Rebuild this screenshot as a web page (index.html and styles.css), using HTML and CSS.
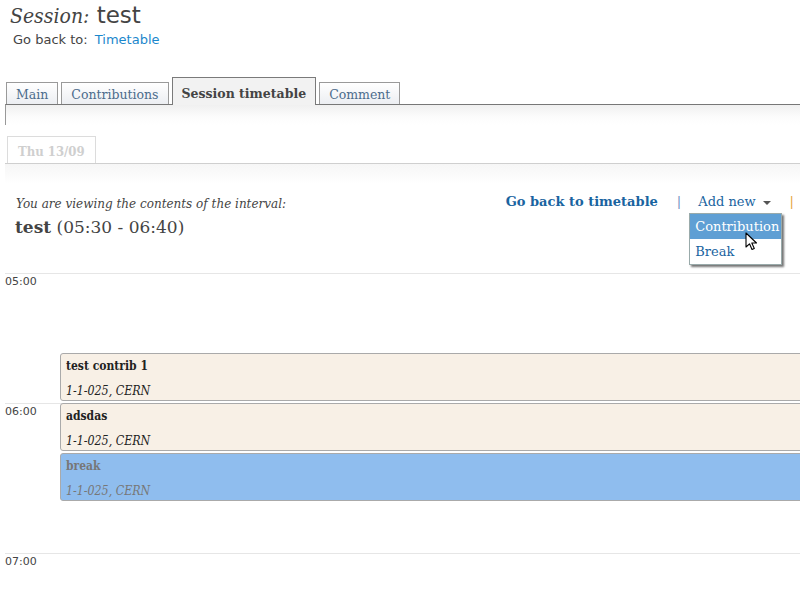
FILE: index.html
```html
<!DOCTYPE html>
<html>
<head>
<meta charset="utf-8">
<link rel="stylesheet" href="styles.css">
</head>
<body>
<div class="page">
  <h1 class="title"><span class="title-label">Session:</span> <span class="title-name">test</span></h1>
  <div class="backto">Go back to: <a class="backto-link">Timetable</a></div>

  <ul class="tabs">
    <li class="tab">Main</li>
    <li class="tab">Contributions</li>
    <li class="tab tab-active">Session timetable</li>
    <li class="tab">Comment</li>
  </ul>
  <div class="tabpanel"></div>

  <ul class="daytabs">
    <li class="daytab">Thu 13/09</li>
  </ul>
  <div class="dayshade"></div>

  <div class="interval">
    <div class="intinfo">
      <div class="viewing">You are viewing the contents of the interval:</div>
      <div class="inttitle"><b class="inttitle-name">test</b> (05:30 - 06:40)</div>
    </div>
    <div class="actions">
      <a class="action-back">Go back to timetable</a>
      <span class="sep sep-blue">|</span>
      <span class="addnew">Add new <span class="caret"></span>
        <span class="dropdown">
          <span class="dd-item dd-item-hover">Contribution</span>
          <span class="dd-item">Break</span>
          <svg class="cursor" width="13" height="20" viewBox="0 0 13 20"><path d="M1 1 L1 15 L4.5 11.8 L7 17.5 L9.3 16.5 L6.8 11 L11.5 11 Z" fill="#fff" stroke="#000" stroke-width="1.1" stroke-linejoin="round"/></svg>
        </span>
      </span>
      <span class="sep sep-orange">|</span>
    </div>
  </div>

  <div class="grid">
    <div class="hour hour-5"><span class="hour-label">05:00</span></div>
    <div class="hour hour-6"><span class="hour-label">06:00</span></div>
    <div class="hour hour-7"><span class="hour-label">07:00</span></div>

    <div class="entry entry-1">
      <div class="entry-title">test contrib 1</div>
      <div class="entry-loc">1-1-025, CERN</div>
    </div>
    <div class="entry entry-2">
      <div class="entry-title">adsdas</div>
      <div class="entry-loc">1-1-025, CERN</div>
    </div>
    <div class="entry entry-break">
      <div class="entry-title">break</div>
      <div class="entry-loc">1-1-025, CERN</div>
    </div>
  </div>
</div>
</body>
</html>
```

FILE: styles.css
```css
html, body {
  margin: 0;
  padding: 0;
  background: #fff;
  overflow: hidden;
}
body {
  font-family: "DejaVu Serif", serif;
  color: #444;
  width: 800px;
  height: 600px;
}
.page {
  width: 800px;
}
.title {
  margin: 0;
  padding-left: 10px;
  font-weight: normal;
  line-height: 24px;
  height: 24px;
  color: #444;
}
.title-label {
  font-family: "DejaVu Serif", serif;
  font-style: italic;
  font-size: 21px;
  font-stretch: condensed;
}
.title-name {
  font-family: "DejaVu Sans", sans-serif;
  font-size: 23px;
  margin-left: -3px;
}
.backto {
  margin-top: 8px;
  padding-left: 13px;
  font-family: "DejaVu Sans", sans-serif;
  font-size: 13px;
  line-height: 16px;
  color: #444;
}
.backto-link {
  color: #1b87cc;
  margin-left: 3px;
}

.tabs {
  list-style: none;
  margin: 29px 0 0 5px;
  padding: 0 0 0 1px;
  display: flex;
  align-items: flex-end;
  gap: 3px;
  height: 27px;
}
.tab {
  box-sizing: border-box;
  border: 1px solid #9a9a9a;
  border-bottom: none;
  height: 22px;
  line-height: 20px;
  padding: 2px 9px 0;
  font-size: 12.5px;
  color: #4c6c8c;
  background: linear-gradient(#fff, #eceef2);
}
.tab-active {
  box-sizing: border-box;
  height: 28px;
  line-height: 20px;
  padding: 6px 9px 0;
  margin-bottom: -1px;
  position: relative;
  z-index: 1;
  font-weight: bold;
  color: #444;
  border-color: #7a7a7a;
  background: #f2f2f2;
}
.tabpanel {
  margin-left: 5px;
  border-top: 1px solid #777;
  border-left: 1px solid #999;
  height: 20px;
  background: linear-gradient(#f0f0f0, #fcfcfc 60%, #fff);
}

.daytabs {
  list-style: none;
  margin: 11px 0 0 5px;
  padding: 0 0 0 2px;
  display: flex;
  height: 27px;
}
.daytab {
  border: 1px solid #dcdcdc;
  border-bottom: none;
  box-sizing: border-box;
  height: 27px;
  width: 89px;
  padding: 5px 0 0 10px;
  line-height: 20px;
  font-size: 13px;
  font-stretch: condensed;
  font-weight: bold;
  color: #cfcfcf;
  background: #fff;
}
.dayshade {
  margin-left: 5px;
  border-top: 1px solid #cfcfcf;
  height: 20px;
  background: linear-gradient(#f6f6f6, #fff);
}

.interval {
  display: flex;
  align-items: flex-start;
  margin-top: 12px;
  padding-left: 15px;
}
.intinfo {
  flex: 1;
}
.viewing {
  font-style: italic;
  font-size: 12px;
  line-height: 14px;
  color: #444;
  padding-left: 1px;
  margin-top: 1px;
}
.inttitle {
  margin-top: 5px;
  font-size: 17px;
  line-height: 22px;
  color: #444;
}
.inttitle-name {
  font-weight: bold;
}
.actions {
  display: flex;
  align-items: center;
  gap: 0;
  padding-right: 6px;
  margin-top: -2px;
  font-size: 13px;
  line-height: 16px;
}
.action-back {
  font-weight: bold;
  color: #1a64a0;
  margin-left: -2px;
}
.sep {
  margin: 0 18px;
  font-size: 13px;
}
.sep-blue { color: #6f8fc0; margin-left: 19px; margin-right: 17px; }
.sep-orange { color: #e5a43c; margin-right: 0; margin-left: 19px; }
.addnew {
  position: relative;
  color: #1a64a0;
  display: flex;
  align-items: center;
  gap: 7px;
}
.caret {
  display: inline-block;
  width: 0;
  height: 0;
  border-left: 4px solid transparent;
  border-right: 4px solid transparent;
  border-top: 4px solid #555;
  margin-top: 1px;
}
.dropdown {
  position: absolute;
  left: -9px;
  top: calc(100% + 3px);
  width: 93px;
  box-sizing: border-box;
  border: 1px solid #9aa;
  background: #fff;
  box-shadow: 2px 2px 2px rgba(0, 0, 0, 0.55);
  display: flex;
  flex-direction: column;
  z-index: 5;
}
.dd-item {
  display: block;
  height: 25px;
  line-height: 25px;
  padding-left: 5px;
  font-size: 13px;
  color: #1a64a0;
}
.dd-item-hover {
  background: #5f9fd4;
  color: #fff;
}
.cursor {
  position: absolute;
  left: 55px;
  top: 18px;
}

.grid {
  position: relative;
  margin-top: 35px;
  margin-left: 5px;
  height: 330px;
}
.hour {
  position: absolute;
  left: 0;
  right: 0;
  border-top: 1px solid #e6e6e6;
}
.hour-5 { top: 0; }
.hour-6 { top: 130px; }
.hour-7 { top: 280px; }
.hour-label {
  display: block;
  font-family: "DejaVu Sans", sans-serif;
  font-size: 11px;
  line-height: 13px;
  margin-top: 1px;
  color: #444;
}
.entry {
  position: absolute;
  left: 55px;
  width: 780px;
  height: 48px;
  box-sizing: border-box;
  border: 1px solid #aaa;
  border-radius: 3px;
  background: #f8f0e6;
  padding: 5px 5px 0;
  z-index: 2;
}
.entry-1 { top: 80px; }
.entry-2 { top: 130px; }
.entry-break {
  top: 180px;
  background: #8fbdee;
}
.entry-title {
  font-size: 12px;
  font-stretch: condensed;
  font-weight: bold;
  line-height: 14px;
  color: #222;
}
.entry-loc {
  margin-top: 11px;
  font-size: 12.3px;
  font-stretch: condensed;
  font-style: italic;
  line-height: 14px;
  color: #222;
}
.entry-break .entry-title,
.entry-break .entry-loc {
  color: #777;
}
```
